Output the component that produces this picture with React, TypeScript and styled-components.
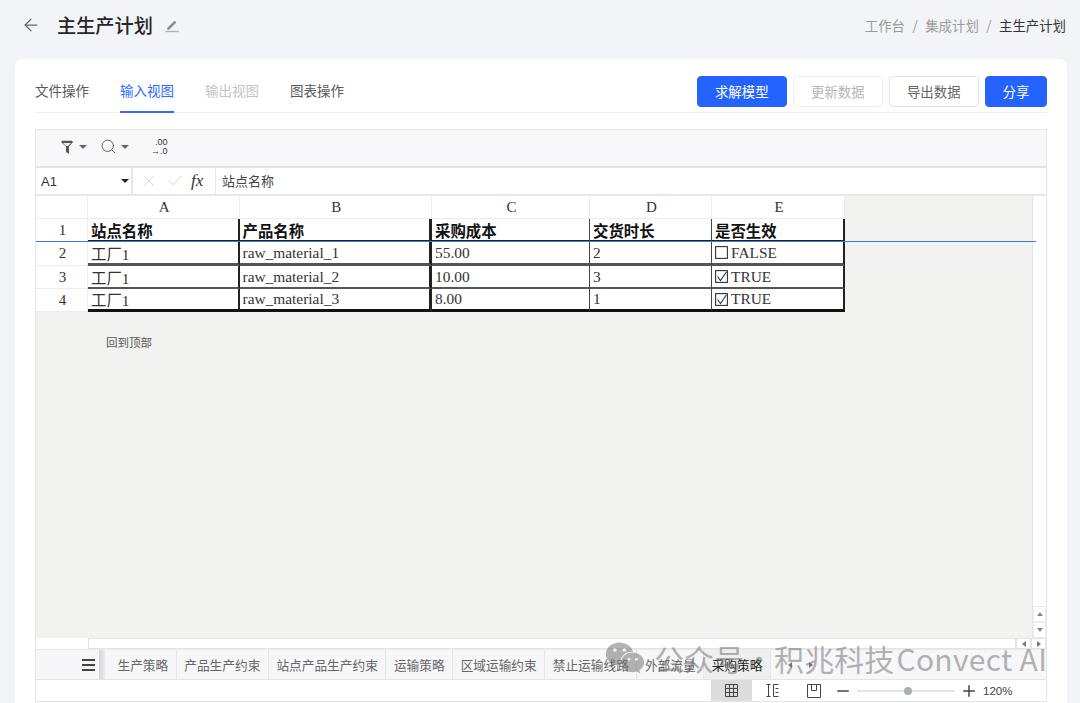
import React from 'react';
import styled, { createGlobalStyle } from 'styled-components';
import { ArrowLeft, Check, Minus, Plus, Search, X } from 'lucide-react';
import { FaWeixin } from 'react-icons/fa';

const SANS = '"Noto Sans CJK SC", "Noto Sans", sans-serif';
const SERIF = '"Liberation Serif", "Noto Sans CJK SC", serif';

const GlobalStyle = createGlobalStyle`
  html, body {
    margin: 0;
    padding: 0;
    background: #f3f4f8;
    font-family: ${SANS};
  }
  * { box-sizing: border-box; }
`;

const Page = styled.div`
  position: relative;
  width: 1080px;
  height: 703px;
  overflow: hidden;
  background: #f3f4f8;
`;

const Header = styled.header`
  height: 59px;
  padding: 0 14px 10px 21px;
  display: flex;
  align-items: center;
  justify-content: space-between;
`;

const TitleGroup = styled.div`
  display: flex;
  align-items: center;
  color: #666;
`;

const Title = styled.h1`
  margin: 0 11px 0 16px;
  font-size: 19.2px;
  line-height: 26px;
  font-weight: 500;
  color: #262626;
`;

const Crumbs = styled.nav`
  display: flex;
  gap: 7.5px;
  font-size: 13.4px;
  color: #9a9a9a;
`;

const CrumbNow = styled.span`
  color: #333;
`;

const Card = styled.main`
  margin: 0 13px 0 15px;
  height: 660px;
  padding: 0 20px;
  background: #fff;
  border-radius: 8px 8px 0 0;
`;

const TopBar = styled.div`
  height: 54px;
  display: flex;
  justify-content: space-between;
  border-bottom: 1px solid #efefef;
`;

const Tabs = styled.div`
  display: flex;
  gap: 31px;
`;

const Tab = styled.div<{ $state?: 'active' | 'disabled' }>`
  height: 54px;
  padding-top: 21px;
  font-size: 13.5px;
  line-height: 20px;
  color: ${(p) => (p.$state === 'active' ? '#2f6bff' : p.$state === 'disabled' ? '#c4c4c4' : '#595959')};
  border-bottom: 2px solid ${(p) => (p.$state === 'active' ? '#2f6bff' : 'transparent')};
`;

const Actions = styled.div`
  display: flex;
  gap: 6.5px;
  padding-top: 17px;
`;

const ActionButton = styled.button<{ $kind?: 'primary' | 'disabled'; $narrow?: boolean }>`
  width: ${(p) => (p.$narrow ? '62px' : '89.5px')};
  height: 31px;
  padding: 0 0 2px;
  font-family: ${SANS};
  font-size: 13.4px;
  border-radius: 4px;
  border: 1px solid ${(p) => (p.$kind === 'primary' ? '#2563ff' : p.$kind === 'disabled' ? '#eeeeee' : '#e2e2e2')};
  background: ${(p) => (p.$kind === 'primary' ? '#2563ff' : '#fff')};
  color: ${(p) => (p.$kind === 'primary' ? '#fff' : p.$kind === 'disabled' ? '#b5b5b5' : '#666')};
`;

const Sheet = styled.section`
  margin-top: 16px;
  height: 573px;
  border: 1px solid #e6e6e6;
  display: flex;
  flex-direction: column;
`;

const Toolbar = styled.div`
  height: 38px;
  flex: none;
  padding: 0 0 3px 23px;
  display: flex;
  align-items: center;
  background: #f8f8fa;
  border-bottom: 2px solid #e3e3e3;
  color: #555;
`;

const ToolGroup = styled.div<{ $gap: number }>`
  display: flex;
  align-items: center;
  gap: 4px;
  margin-right: ${(p) => p.$gap}px;
`;

const Caret = styled.span`
  width: 0;
  height: 0;
  border-left: 4px solid transparent;
  border-right: 4px solid transparent;
  border-top: 4px solid #666;
`;

const DecimalIcon = styled.div`
  display: flex;
  flex-direction: column;
  font-family: "Liberation Sans", sans-serif;
  font-size: 9px;
  line-height: 8.5px;
  color: #333;
  text-align: right;
`;

const FormulaBar = styled.div`
  height: 28px;
  flex: none;
  display: flex;
  background: #fff;
  border-bottom: 2px solid #e8e8e8;
`;

const NameBox = styled.div`
  width: 97px;
  padding: 0 2px 0 5px;
  display: flex;
  align-items: center;
  justify-content: space-between;
  font-family: "Liberation Sans", sans-serif;
  font-size: 13px;
  color: #333;
  border-right: 2px solid #e8e8e8;
`;

const DarkCaret = styled(Caret)`
  border-top-color: #222;
`;

const FormulaButtons = styled.div`
  width: 83px;
  padding: 0 5px 0 7px;
  display: flex;
  align-items: center;
  gap: 8px;
  color: #d2d2d2;
  border-right: 1px solid #e8e8e8;
`;

const Fx = styled.span`
  font-family: "Liberation Serif", serif;
  font-style: italic;
  font-size: 17px;
  color: #333;
  margin-left: -1px;
`;

const FormulaInput = styled.div`
  padding-left: 6px;
  font-size: 13px;
  line-height: 26px;
  color: #444;
`;

const GridWrap = styled.div`
  flex: 1;
  min-height: 0;
  display: flex;
  position: relative;
`;

const FreezeLine = styled.div`
  position: absolute;
  left: 0;
  top: 45px;
  width: 1000px;
  height: 1px;
  background: #3b78e0;
`;

const GridArea = styled.div`
  flex: 1;
  background: #f2f2f1;
`;

const Table = styled.div`
  display: grid;
  grid-template-columns: 52px 151.5px 192.5px 158px 122px 133px;
  grid-template-rows: 23px 23px 24px 23px 23px;
  width: 809px;
`;

const ColHead = styled.div`
  background: #fff;
  display: flex;
  align-items: center;
  justify-content: center;
  padding-left: 2px;
  font-family: ${SERIF};
  font-size: 15px;
  color: #333;
  border-right: 1px solid #ececec;
  border-bottom: 1px solid #ececec;
`;

const Cell = styled.div<{ $right: string; $bottom: string; $bold?: boolean }>`
  background: #fff;
  display: flex;
  align-items: center;
  gap: 3px;
  padding-left: 3px;
  font-family: ${SERIF};
  font-size: 15.4px;
  font-weight: ${(p) => (p.$bold ? 700 : 400)};
  color: ${(p) => (p.$bold ? '#111' : '#333')};
  border-right: ${(p) => p.$right};
  border-bottom: ${(p) => p.$bottom};
  white-space: nowrap;
`;

const BackTop = styled.div`
  margin: 22px 0 0 70px;
  font-size: 11.5px;
  line-height: 16px;
  color: #555;
`;

const VScroll = styled.div`
  width: 14px;
  flex: none;
  background: #fff;
  border-left: 1px solid #e4e4e4;
  display: flex;
  flex-direction: column;
  justify-content: flex-end;
`;

const ScrollButton = styled.div`
  height: 16px;
  display: flex;
  align-items: center;
  justify-content: center;
  border: 1px solid #ececec;
`;

const ArrowUp = styled.span<{ $down?: boolean }>`
  width: 0;
  height: 0;
  border-left: 3px solid transparent;
  border-right: 3px solid transparent;
  border-top: ${(p) => (p.$down ? '4px solid #888' : 'none')};
  border-bottom: ${(p) => (p.$down ? 'none' : '4px solid #888')};
`;

const ArrowSide = styled.span<{ $left?: boolean }>`
  width: 0;
  height: 0;
  border-top: 3px solid transparent;
  border-bottom: 3px solid transparent;
  border-left: ${(p) => (p.$left ? 'none' : '4px solid #777')};
  border-right: ${(p) => (p.$left ? '4px solid #777' : 'none')};
`;

const HScroll = styled.div`
  height: 11px;
  flex: none;
  display: flex;
  background: #fff;
`;

const HTrack = styled.div`
  flex: 1;
  margin-left: 52px;
  border: 1px solid #e4e4e4;
`;

const HButton = styled.div`
  width: 15px;
  display: flex;
  align-items: center;
  justify-content: center;
  border: 1px solid #e4e4e4;
`;

const TabBar = styled.div`
  height: 31px;
  flex: none;
  display: flex;
  align-items: stretch;
  background: #f7f7f9;
  border-top: 1px solid #e9e9e9;
  border-bottom: 1px solid #e4e4e4;
`;

const MenuSlot = styled.div`
  width: 63px;
  padding: 0 4px 0 0;
  display: flex;
  align-items: center;
  justify-content: flex-end;
  font-size: 0;
`;

const MenuBars = styled.div`
  width: 13px;
  height: 12px;
  border-top: 2px solid #444;
  border-bottom: 2px solid #444;
  display: flex;
  align-items: center;
  &::before {
    content: '';
    width: 100%;
    height: 2px;
    background: #444;
  }
`;

const Handle = styled.div`
  width: 6px;
  margin-right: 5px;
  background: linear-gradient(90deg, #d4d4d4, #ececec);
`;

const SheetTab = styled.div<{ $active?: boolean }>`
  padding: 0 7.5px;
  display: flex;
  align-items: center;
  font-size: 12.7px;
  color: ${(p) => (p.$active ? '#222' : '#666')};
  background: ${(p) => (p.$active ? '#efefef' : 'transparent')};
  border-right: 1px solid #e6e6e6;
  white-space: nowrap;
`;

const TabNav = styled.div`
  display: flex;
  align-items: center;
  gap: 17px;
  padding-left: 17px;
`;

const StatusBar = styled.div`
  height: 21px;
  flex: none;
  display: flex;
  align-items: center;
  padding-left: 675px;
  background: #fff;
  color: #444;
`;

const ViewButton = styled.div<{ $active?: boolean }>`
  width: 41px;
  height: 100%;
  display: flex;
  align-items: center;
  justify-content: center;
  background: ${(p) => (p.$active ? '#dcdcdc' : 'transparent')};
`;

const ZoomSlider = styled.div`
  position: relative;
  width: 98px;
  height: 2px;
  margin: 0 5px;
  background: #e4e6e8;
`;

const ZoomKnob = styled.span`
  position: absolute;
  left: 47px;
  top: -3px;
  width: 8px;
  height: 8px;
  border-radius: 50%;
  background: #a9b0ad;
`;

const ZoomLabel = styled.span`
  margin-left: 5px;
  font-family: "Liberation Sans", sans-serif;
  font-size: 11.5px;
  color: #444;
`;

const Watermark = styled.div`
  position: absolute;
  left: 605px;
  top: 636px;
  display: flex;
  align-items: center;
  gap: 9px;
  font-size: 30px;
  line-height: 44px;
  letter-spacing: 0.1px;
  color: rgba(105, 105, 105, 0.5);
  white-space: nowrap;
  pointer-events: none;
`;

const WatermarkCjk = styled.span`
  word-spacing: -7px;
`;

const WatermarkLatin = styled.span`
  margin-left: -7px;
  letter-spacing: 0.3px;
`;

const Pen = () => (
  <svg width="16" height="16" viewBox="0 0 15 15">
    <path d="M3 10.2 9.8 3.4l1.8 1.8-6.8 6.8H3z" fill="#8c8c8c" />
    <rect x="1.5" y="13" width="12.5" height="1.2" fill="#b0b0b0" />
  </svg>
);

const Funnel = () => (
  <svg width="16" height="16" viewBox="0 0 16 16">
    <path d="M1.5 2.5h13L10 7.5V15L7 13V7.5z" fill="#555" />
    <path d="M3 2.5h10" stroke="#555" strokeWidth="1.5" />
    <path d="M4 4h8L9 7H7z" fill="#eee" />
  </svg>
);

const CheckBox = ({ on }: { on: boolean }) => (
  <svg width="13" height="13" viewBox="0 0 13 13">
    <rect x="0.6" y="0.6" width="11.8" height="11.8" fill="none" stroke="#333" strokeWidth="1.1" />
    {on && <path d="M2.5 6.5 5.5 10.5 11.5 1.8" fill="none" stroke="#333" strokeWidth="1.1" />}
  </svg>
);

const GridIcon = () => (
  <svg width="13" height="13" viewBox="0 0 13 13" fill="none" stroke="#444">
    <path d="M.5.5h12v12H.5zM.5 4.5h12M.5 8.5h12M4.5.5v12M8.5.5v12" />
  </svg>
);

const PageBreakIcon = () => (
  <svg width="13" height="13" viewBox="0 0 13 13" fill="none" stroke="#444">
    <path d="M.5.5h4M.5 12.5h4M2.5.5v12M12.5.5h-5M12.5 12.5h-5M7.5.5v12M9.5 4.5h3M9.5 8.5h3" />
  </svg>
);

const LayoutIcon = () => (
  <svg width="14" height="14" viewBox="0 0 14 14" fill="none" stroke="#444">
    <path d="M.5.5h13v13H.5zM4.5.5v6h5v-6" />
  </svg>
);

const thin = '1px solid #444';
const mid = '2px solid #222';
const heavy = '3px solid #555';
const black = '3px solid #111';

const columns = ['A', 'B', 'C', 'D', 'E'];
const rightBorders = ['2px solid #222', '3px solid #222', thin, thin, mid];
const rowBottoms = [mid, heavy, '2px solid #555', black];
const rows: string[][] = [
  ['站点名称', '产品名称', '采购成本', '交货时长', '是否生效'],
  ['工厂1', 'raw_material_1', '55.00', '2', 'FALSE'],
  ['工厂1', 'raw_material_2', '10.00', '3', 'TRUE'],
  ['工厂1', 'raw_material_3', '8.00', '1', 'TRUE'],
];
const sheetTabs = ['生产策略', '产品生产约束', '站点产品生产约束', '运输策略', '区域运输约束', '禁止运输线路', '外部流量', '采购策略'];

export default function App() {
  return (
    <Page>
      <GlobalStyle />
      <Header>
        <TitleGroup>
          <ArrowLeft size={20} strokeWidth={1.5} />
          <Title>主生产计划</Title>
          <Pen />
        </TitleGroup>
        <Crumbs>
          <span>工作台</span>
          <span>/</span>
          <span>集成计划</span>
          <span>/</span>
          <CrumbNow>主生产计划</CrumbNow>
        </Crumbs>
      </Header>
      <Card>
        <TopBar>
          <Tabs>
            <Tab>文件操作</Tab>
            <Tab $state="active">输入视图</Tab>
            <Tab $state="disabled">输出视图</Tab>
            <Tab>图表操作</Tab>
          </Tabs>
          <Actions>
            <ActionButton $kind="primary">求解模型</ActionButton>
            <ActionButton $kind="disabled">更新数据</ActionButton>
            <ActionButton>导出数据</ActionButton>
            <ActionButton $kind="primary" $narrow>分享</ActionButton>
          </Actions>
        </TopBar>
        <Sheet>
          <Toolbar>
            <ToolGroup $gap={13}>
              <Funnel />
              <Caret />
            </ToolGroup>
            <ToolGroup $gap={22}>
              <Search size={17} strokeWidth={1.3} />
              <Caret />
            </ToolGroup>
            <DecimalIcon>
              <span>.00</span>
              <span>→.0</span>
            </DecimalIcon>
          </Toolbar>
          <FormulaBar>
            <NameBox>
              A1
              <DarkCaret />
            </NameBox>
            <FormulaButtons>
              <X size={18} strokeWidth={1.3} />
              <Check size={18} strokeWidth={1.3} />
              <Fx>fx</Fx>
            </FormulaButtons>
            <FormulaInput>站点名称</FormulaInput>
          </FormulaBar>
          <GridWrap>
            <GridArea>
              <Table>
                <ColHead />
                {columns.map((c) => (
                  <ColHead key={c}>{c}</ColHead>
                ))}
                {rows.map((row, r) => (
                  <React.Fragment key={r}>
                    <ColHead>{r + 1}</ColHead>
                    {row.map((value, c) => (
                      <Cell key={c} $right={rightBorders[c]} $bottom={rowBottoms[r]} $bold={r === 0}>
                        {r > 0 && c === 4 && <CheckBox on={value === 'TRUE'} />}
                        {value}
                      </Cell>
                    ))}
                  </React.Fragment>
                ))}
              </Table>
              <BackTop>回到顶部</BackTop>
            </GridArea>
            <VScroll>
              <ScrollButton><ArrowUp /></ScrollButton>
              <ScrollButton><ArrowUp $down /></ScrollButton>
            </VScroll>
            <FreezeLine />
          </GridWrap>
          <HScroll>
            <HTrack />
            <HButton><ArrowSide $left /></HButton>
            <HButton><ArrowSide /></HButton>
          </HScroll>
          <TabBar>
            <MenuSlot><MenuBars /></MenuSlot>
            <Handle />
            {sheetTabs.map((name, i) => (
              <SheetTab key={name} $active={i === sheetTabs.length - 1}>{name}</SheetTab>
            ))}
            <TabNav>
              <ArrowSide $left />
              <ArrowSide />
            </TabNav>
          </TabBar>
          <StatusBar>
            <ViewButton $active><GridIcon /></ViewButton>
            <ViewButton><PageBreakIcon /></ViewButton>
            <ViewButton><LayoutIcon /></ViewButton>
            <Minus size={18} strokeWidth={2} />
            <ZoomSlider><ZoomKnob /></ZoomSlider>
            <Plus size={18} strokeWidth={2} />
            <ZoomLabel>120%</ZoomLabel>
          </StatusBar>
        </Sheet>
      </Card>
      <Watermark>
        <FaWeixin size={40} />
        <WatermarkCjk>公众号 · 积兆科技</WatermarkCjk>
        <WatermarkLatin>Convect AI</WatermarkLatin>
      </Watermark>
    </Page>
  );
}
